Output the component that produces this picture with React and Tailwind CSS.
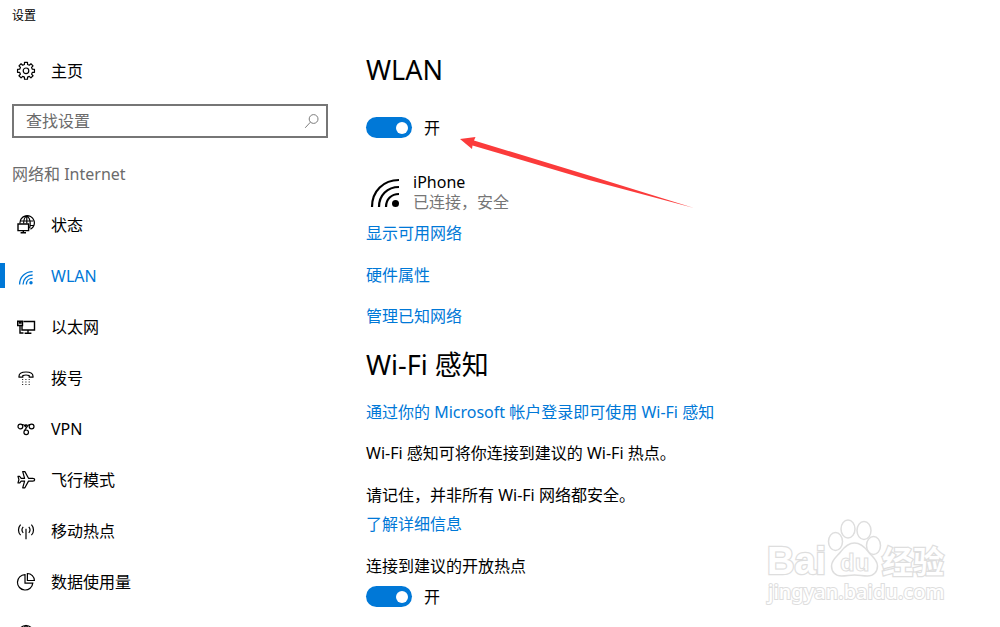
import { useState } from 'react'

function Icon({ children, className = 'size-5' }) {
  return (
    <svg viewBox="0 0 20 20" className={className} fill="none" stroke="currentColor" strokeWidth="1.2" aria-hidden="true">
      {children}
    </svg>
  )
}

// Eight broad teeth, four points for each
const gearPoints = Array.from({ length: 8 }, (_, i) =>
  [[-14, 6.5], [-10, 8.6], [10, 8.6], [14, 6.5]].map(([offset, r]) => {
    const a = ((i * 45 + offset) * Math.PI) / 180
    return `${(10 + r * Math.cos(a)).toFixed(2)},${(9.8 + r * Math.sin(a)).toFixed(2)}`
  }).join(' ')
).join(' ')

function GearIcon() {
  return (
    <Icon>
      <polygon points={gearPoints} strokeLinejoin="round" />
      <circle cx="10" cy="9.8" r="2.8" />
    </Icon>
  )
}

function StatusIcon() {
  return (
    <Icon>
      <path d="M4 8.5A7.2 7.2 0 1 1 14.5 14.2M4.6 6h12.6M13.5 10.5h4.3M7.6 8.5c.2-4 1.4-7 3.2-7s3.4 3 3.4 7c0 2-.2 3.6-.6 4.8M10.8 1.5v7" />
      <path d="M2 9h10.6v6.6H2zM7.3 15.6v2M4.6 17.8h5.4" strokeWidth="1.4" />
    </Icon>
  )
}

function WifiIcon() {
  return (
    <Icon>
      <path d="M3.6 18.4C3.6 11 9.2 5.6 16.6 5.6M7 18.4c0-5.4 4.2-9.4 9.6-9.4M10.4 18.4c0-3.6 2.6-6 6.2-6" strokeWidth="1.3" />
      <circle cx="15" cy="16.8" r="1.7" fill="currentColor" stroke="none" />
    </Icon>
  )
}

function SignalIcon() {
  return (
    <svg viewBox="0 0 30 30" className="size-[30px]" fill="none" stroke="black" strokeWidth="2.2" aria-hidden="true">
      <path d="M2 30C2 14 13.5 3 29 3M9 30c0-12 8.5-20 20-20M16 30c0-8 5.500-13 13-13" />
      <circle cx="25.5" cy="26.5" r="3.5" fill="black" stroke="none" />
    </svg>
  )
}

function EthernetIcon() {
  return (
    <Icon>
      <path d="M7.500 4.500H18.500V13H6V8.500M1.700 4.200h4.800v4.300H1.700zM3.500 4.200v1.800h1.400V4.200M4 8.500v7.500h3.500M12 13v3M8.600 16.200h6.800" strokeWidth="1.4" />
    </Icon>
  )
}

function DialIcon() {
  return (
    <Icon>
      <path strokeLinejoin="round" d="M3 8.300c0-2.800 3-4.300 7-4.300s7 1.500 7 4.300v.9h-3.800V7.600c-1.800-.7-4.600-.7-6.400 0v1.600H3z" />
      <g fill="currentColor" stroke="none" opacity="0.8">
        {[6, 9.3, 12.6].map(x =>
          [11, 13.5, 16].map(y => <rect key={`${x}-${y}`} x={x} y={y} width="1.2" height="1" />)
        )}
      </g>
    </Icon>
  )
}

function VpnIcon() {
  return (
    <Icon>
      <circle cx="4.400" cy="7.500" r="2.400" />
      <circle cx="15.600" cy="7.500" r="2.400" />
      <circle cx="10.200" cy="13.300" r="2.300" />
      <path d="M6 5.600c1.300-.4 2 .1 2.800 1.300l1 1.300M14 5.600c-1.200-.1-1.900.5-2.700 1.700L8.200 12M8.800 5.500l1.200 1.200 1.200-1.200" />
    </Icon>
  )
}

function PlaneIcon() {
  return (
    <Icon>
      <path strokeLinejoin="round" d="M12.500 8.300h4.300c1.200 0 1.900.6 1.900 1.400s-.7 1.400-1.900 1.400h-4.300l-3.600 6.700H6.700l1.900-6.700H5.200L3.600 13H2l.9-3.300L2 6.400h1.600l1.600 1.900h3.400L6.700 1.600h2.200z" />
    </Icon>
  )
}

function HotspotIcon() {
  return (
    <Icon>
      <path d="M4.600 3.600c-2.800 3-2.800 7.600 0 10.600M7.200 5.900c-1.500 1.800-1.500 4.200 0 6M15.400 3.600c2.800 3 2.800 7.600 0 10.600M12.800 5.900c1.500 1.800 1.500 4.200 0 6M10 7.800v10.400" />
    </Icon>
  )
}

function PieIcon() {
  return (
    <Icon>
      <path d="M9 2.600a7.700 7.700 0 1 0 7.800 8.500H9z" />
      <path d="M11.400 1.500a7 7 0 0 1 7 7h-7z" />
    </Icon>
  )
}

function GlobeIcon() {
  return (
    <Icon>
      <circle cx="10" cy="10" r="7.500" />
      <path d="M2.500 10h15M4 5h12M10 2.500c-5 4-5 11 0 15 5-4 5-11 0-15z" />
    </Icon>
  )
}

const navItems = [
  { label: '状态', icon: StatusIcon },
  { label: 'WLAN', icon: WifiIcon },
  { label: '以太网', icon: EthernetIcon },
  { label: '拨号', icon: DialIcon },
  { label: 'VPN', icon: VpnIcon },
  { label: '飞行模式', icon: PlaneIcon },
  { label: '移动热点', icon: HotspotIcon },
  { label: '数据使用量', icon: PieIcon },
]

function Toggle({ label, className }) {
  const [on, setOn] = useState(true)
  return (
    <label className={`flex h-[21px] w-fit items-center gap-3 ${className}`}>
      <input type="checkbox" role="switch" aria-label={label} checked={on} onChange={e => setOn(e.target.checked)} className="sr-only" />
      <span className={`flex h-[21px] w-[46px] items-center rounded-full px-1 ${on ? 'justify-end bg-[#0078d7]' : 'justify-start bg-gray-400'}`}>
        <span className="size-3 rounded-full bg-white" />
      </span>
      <span>{on ? '开' : '关'}</span>
    </label>
  )
}

function TextLink({ children, className }) {
  return (
    <a href="#" className={`block w-fit text-[#0078d7] hover:text-gray-500 ${className}`}>{children}</a>
  )
}

function Sidebar({ active, onSelect }) {
  return (
    <aside className="w-[340px] shrink-0">
      <p className="flex h-8 items-center pl-3 text-xs leading-4">设置</p>
      <a href="#" className="mt-[13px] flex h-[51px] items-center gap-[15px] pl-4">
        <GearIcon />
        主页
      </a>
      <div className="mx-3 mt-2 flex h-[34px] items-center border-2 border-[#767676] pr-1.5 pl-3">
        <input type="text" aria-label="查找设置" placeholder="查找设置" className="min-w-0 flex-1 outline-none placeholder:text-[#6b6b6b]" />
        <Icon className="size-4 text-[#767676]">
          <circle cx="12" cy="7.500" r="5.500" />
          <path d="M8 11.500 1.500 18.500" />
        </Icon>
      </div>
      <h2 className="mt-[10px] flex h-[51px] items-center pl-3 text-[#6b6b6b]">网络和 Internet</h2>
      <nav>
        {navItems.map(({ label, icon: ItemIcon }) => {
          const selected = label === active
          return (
            <button
              key={label}
              type="button"
              onClick={() => onSelect(label)}
              className={`flex h-[51px] w-full items-center text-left ${selected ? 'text-[#0078d7]' : ''}`}
            >
              <span className={`mr-[11px] h-[25px] w-[5px] ${selected ? 'bg-[#0078d7]' : ''}`} />
              <ItemIcon />
              <span className="ml-[15px]">{label}</span>
            </button>
          )
        })}
        <button type="button" aria-label="代理" className="flex h-[51px] w-full items-center pl-4">
          <GlobeIcon />
        </button>
      </nav>
    </aside>
  )
}

// Red pointer drawn over the page, aimed at the WLAN switch
function Arrow() {
  return (
    <svg viewBox="0 0 236 74" className="pointer-events-none absolute top-[135px] left-[459px] h-[74px] w-[236px]" aria-hidden="true">
      <path d="M1 4 16.500 2 15 5.500 135 42 235 73 130 45 13.500 10.500 13 14z" fill="#fb3b3b" />
    </svg>
  )
}

function Watermark() {
  return (
    <svg viewBox="0 0 190 100" className="pointer-events-none absolute right-[46px] bottom-[12px] h-[100px] w-[190px]" fill="white" stroke="#dedede" strokeWidth="1.5" aria-hidden="true">
      <g className="font-['Liberation_Sans','Noto_Sans_CJK_SC',sans-serif] font-bold" strokeWidth="2.5" paintOrder="stroke">
        <text x="3" y="59" fontSize="38">Bai</text>
        <text x="118" y="58" fontSize="31">经验</text>
      </g>
      <ellipse cx="71.5" cy="26.5" rx="7" ry="9" />
      <ellipse cx="84" cy="14" rx="7" ry="9" />
      <ellipse cx="100" cy="15.5" rx="7" ry="9" />
      <ellipse cx="109.5" cy="30.5" rx="7" ry="9" />
      <path d="M90.500 28c7 0 11 5 14 9s9 8 9 14-4 10-10 10c-5 0-8-1-13-1s-8 1-13 1c-6 0-10-4-10-10s6-10 9-14 7-9 14-9z" />
      <text x="76" y="56" fontSize="24" className="font-['Liberation_Sans',sans-serif] font-bold" strokeWidth="1">du</text>
      <text x="4" y="84" fontSize="20" className="font-['Noto_Sans',sans-serif] font-medium" strokeWidth="2" paintOrder="stroke">jingyan.baidu.com</text>
    </svg>
  )
}

export default function App() {
  const [active, setActive] = useState('WLAN')

  return (
    <div className="relative flex h-screen overflow-hidden bg-white font-['Noto_Sans','Noto_Sans_CJK_SC',sans-serif] text-base leading-5 text-black">
      <Sidebar active={active} onSelect={setActive} />

      <main className="min-w-0 flex-1 pt-[52px] pl-[26px]">
        <h1 className="text-[27px] leading-9">WLAN</h1>
        <Toggle label="WLAN" className="mt-[29px]" />

        <div className="mt-[34px] flex items-center gap-[13px] pl-1">
          <SignalIcon />
          <div>
            <p>iPhone</p>
            <p className="text-[#767676]">已连接，安全</p>
          </div>
        </div>
        <TextLink className="mt-[11px]">显示可用网络</TextLink>
        <TextLink className="mt-[22px]">硬件属性</TextLink>
        <TextLink className="mt-[21px]">管理已知网络</TextLink>

        <h2 className="mt-[21px] text-[27px] leading-9">Wi-Fi 感知</h2>
        <TextLink className="mt-[19px]">通过你的 Microsoft 帐户登录即可使用 Wi-Fi 感知</TextLink>
        <p className="mt-[21px]">Wi-Fi 感知可将你连接到建议的 Wi-Fi 热点。</p>
        <p className="mt-[22px]">请记住，并非所有 Wi-Fi 网络都安全。</p>
        <TextLink className="mt-[9px]">了解详细信息</TextLink>

        <p className="mt-[22px]">连接到建议的开放热点</p>
        <Toggle label="连接到建议的开放热点" className="mt-[10px]" />
      </main>

      <Arrow />
      <Watermark />
    </div>
  )
}
